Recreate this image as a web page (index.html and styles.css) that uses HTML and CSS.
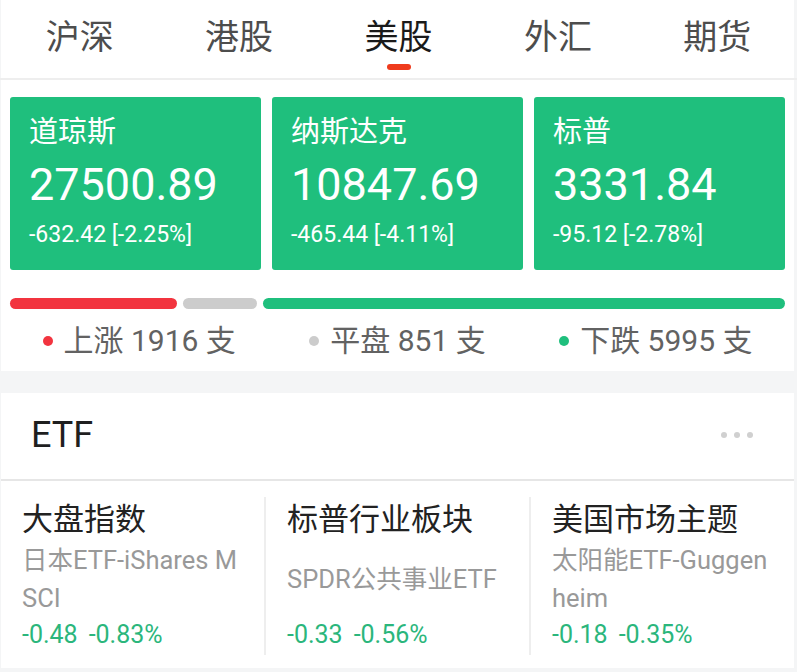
FILE: index.html
```html
<!DOCTYPE html>
<html lang="zh-CN">
<head>
<meta charset="utf-8">
<title>美股</title>
<link rel="stylesheet" href="styles.css">
</head>
<body>
<div class="page">
  <section class="panel top">
    <nav class="tabs">
      <div class="tab">沪深</div>
      <div class="tab">港股</div>
      <div class="tab active">美股</div>
      <div class="tab">外汇</div>
      <div class="tab">期货</div>
    </nav>
    <div class="cards">
      <div class="card">
        <div class="card-name">道琼斯</div>
        <div class="card-value">27500.89</div>
        <div class="card-change">-632.42 [-2.25%]</div>
      </div>
      <div class="card">
        <div class="card-name">纳斯达克</div>
        <div class="card-value">10847.69</div>
        <div class="card-change">-465.44 [-4.11%]</div>
      </div>
      <div class="card">
        <div class="card-name">标普</div>
        <div class="card-value">3331.84</div>
        <div class="card-change">-95.12 [-2.78%]</div>
      </div>
    </div>
    <div class="breadth">
      <div class="seg seg-up"></div>
      <div class="seg seg-flat"></div>
      <div class="seg seg-down"></div>
    </div>
    <div class="legend">
      <div class="legend-item"><span class="dot dot-up"></span>上涨 1916 支</div>
      <div class="legend-item"><span class="dot dot-flat"></span>平盘 851 支</div>
      <div class="legend-item"><span class="dot dot-down"></span>下跌 5995 支</div>
    </div>
  </section>
  <section class="panel etf">
    <header class="etf-head">
      <div class="etf-title">ETF</div>
      <div class="more"><span></span><span></span><span></span></div>
    </header>
    <div class="etf-list">
      <div class="etf-item">
        <div class="etf-name">大盘指数</div>
        <div class="etf-sub"><span>日本ETF-iShares MSCI</span></div>
        <div class="etf-change"><span class="chg">-0.48</span><span>-0.83%</span></div>
      </div>
      <div class="etf-item">
        <div class="etf-name">标普行业板块</div>
        <div class="etf-sub"><span>SPDR公共事业ETF</span></div>
        <div class="etf-change"><span class="chg">-0.33</span><span>-0.56%</span></div>
      </div>
      <div class="etf-item">
        <div class="etf-name">美国市场主题</div>
        <div class="etf-sub"><span>太阳能ETF-Guggenheim</span></div>
        <div class="etf-change"><span class="chg">-0.18</span><span>-0.35%</span></div>
      </div>
    </div>
  </section>
</div>
</body>
</html>
```
FILE: styles.css
```css
* { box-sizing: border-box; }
html, body {
  margin: 0;
  padding: 0;
  background: #f4f5f6;
}
body {
  font-family: Roboto, "Noto Sans CJK SC", sans-serif;
  width: 797px;
  height: 672px;
  overflow: hidden;
}
.page {
  margin-left: 1px;
  width: 793px;
}
.panel {
  background: #ffffff;
}
.top {
  padding-bottom: 11px;
}
.tabs {
  display: flex;
  height: 80px;
  border-bottom: 2px solid #eeeeee;
  margin-left: -1px;
  width: 797px;
}
.tab {
  flex: 1;
  text-align: center;
  font-size: 34px;
  line-height: 40px;
  padding-top: 17px;
  color: #4d4d4d;
  position: relative;
}
.tab.active {
  color: #1a1a1a;
}
.tab.active::after {
  content: "";
  position: absolute;
  left: 50%;
  top: 64px;
  width: 24px;
  height: 6px;
  margin-left: -12px;
  border-radius: 3px;
  background: #ef3b1d;
}
.cards {
  display: flex;
  gap: 11px;
  padding: 17px 9px 0 9px;
}
.card {
  flex: 1;
  height: 173px;
  background: #1fbf7d;
  border-radius: 3px;
  color: #ffffff;
  padding: 19px 0 0 19px;
}
.card-name {
  font-size: 29px;
  line-height: 32px;
}
.card-value {
  font-size: 45px;
  line-height: 56px;
  margin-top: 9px;
}
.card-change {
  font-size: 23px;
  line-height: 26px;
  margin-top: 9px;
}
.breadth {
  display: flex;
  gap: 6px;
  padding: 28px 9px 0 9px;
}
.seg {
  height: 11px;
  border-radius: 6px;
}
.seg-up { width: 167px; background: #f2343f; }
.seg-flat { width: 74px; background: #cccccc; }
.seg-down { flex: 1; background: #1fbf7d; }
.legend {
  display: flex;
  padding: 13px 9px 0 9px;
}
.legend-item {
  flex: 1;
  display: flex;
  align-items: center;
  justify-content: center;
  font-size: 30px;
  line-height: 38px;
  color: #626262;
}
.dot {
  width: 10px;
  height: 10px;
  border-radius: 50%;
  margin-right: 11px;
}
.dot-up { background: #f2343f; }
.dot-flat { background: #cccccc; }
.dot-down { background: #1fbf7d; }

.etf {
  margin-top: 22px;
  height: 275px;
}
.etf-head {
  display: flex;
  align-items: center;
  justify-content: space-between;
  height: 88px;
  border-bottom: 2px solid #e6e6e6;
  padding: 0 41px 2px 30px;
}
.etf-title {
  font-size: 36px;
  color: #1f1f1f;
}
.more {
  display: flex;
  gap: 7px;
}
.more span {
  width: 6px;
  height: 6px;
  border-radius: 50%;
  background: #d0d0d0;
}
.etf-list {
  display: flex;
  padding-top: 16px;
}
.etf-item {
  flex: 1;
  padding: 2px 18px 0 21px;
  height: 158px;
}
.etf-item + .etf-item {
  border-left: 2px solid #eeeeee;
}
.etf-name {
  font-size: 31px;
  line-height: 42px;
  color: #222222;
}
.etf-sub {
  height: 76px;
  display: flex;
  align-items: center;
  font-size: 25.5px;
  line-height: 38px;
  color: #999999;
  word-break: break-all;
}
.etf-change {
  font-size: 25px;
  line-height: 36px;
  color: #2bb67c;
}
.chg {
  margin-right: 11px;
}
```
